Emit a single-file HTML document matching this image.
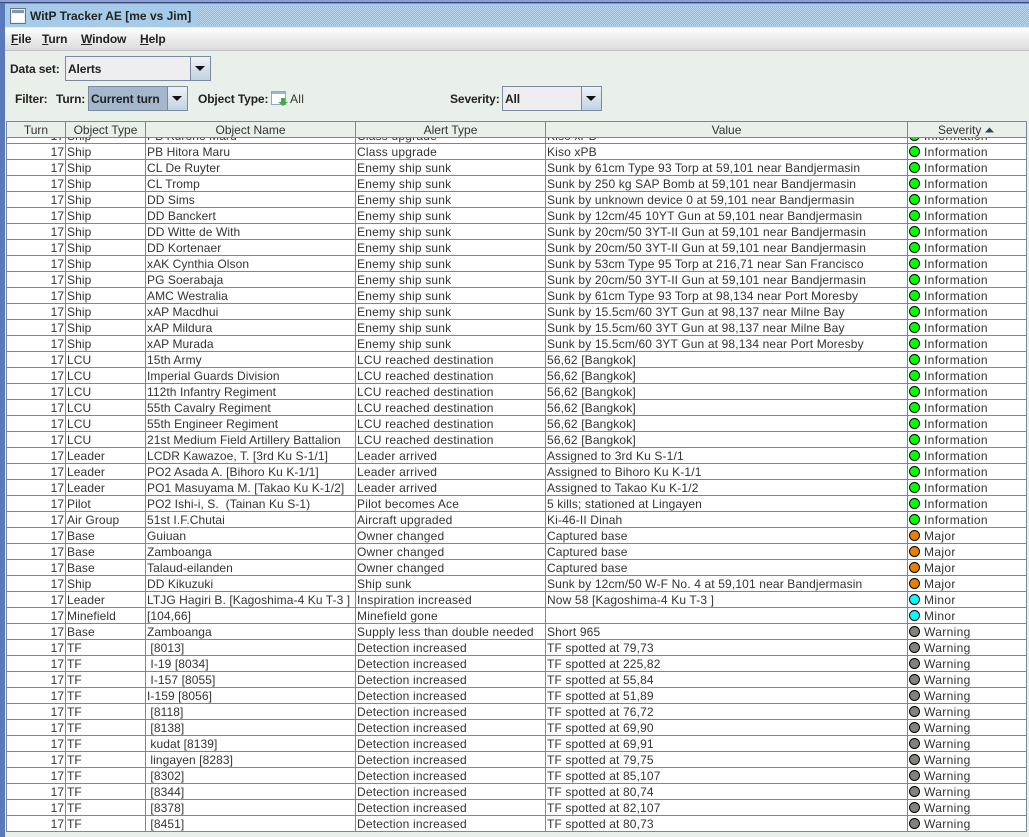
<!DOCTYPE html>
<html><head><meta charset="utf-8"><title>WitP Tracker AE</title>
<style>
html,body{margin:0;padding:0;width:1029px;height:837px;overflow:hidden;background:#eeeeee}
body{position:relative;font-family:"Liberation Sans",Arial,sans-serif;font-size:12px;color:#333}
.a{position:absolute;white-space:pre}
#bg{left:0;top:0;width:1029px;height:837px;background:conic-gradient(#f1ebf0 25%,#e9efe9 0 50%,#f1ebf0 0 75%,#e9efe9 0) 0 0/2px 2px}
#frame{left:0;top:0;width:1029px;height:4px;background:#7f93c4;border-top:2px solid #8aa0d0;border-bottom:0;box-sizing:border-box}
#frameline{left:0;top:2px;width:1029px;height:1px;background:#3b4a80}
#fl{left:0;top:3px;width:5px;height:834px;background:#5a78bc}
#title{left:5px;top:4px;width:1024px;height:23px;background:#a6cbe8}
#dots{left:197px;top:7px;width:832px;height:18px;background:conic-gradient(#9ab6d2 25%,#bcd7ec 0 50%,#9ab6d2 0 75%,#bcd7ec 0) 0 0/2px 2px}
#tt{left:30px;top:9px;font-weight:bold;color:#222;font-size:12px}
#menu{left:5px;top:28px;width:1024px;height:22px;background:linear-gradient(#ffffff,#f4f4f4 25%,#dcdcdc);border-bottom:1px solid #bfbfc8}
.m{top:32px;font-weight:bold;color:#222;letter-spacing:-.1px}
.l{font-weight:bold;color:#222;letter-spacing:-.12px}
.c{box-sizing:border-box;border:1px solid #7a8aa0;background:#eeeef0}
.b{position:absolute;right:0;top:0;bottom:0;width:19px;border-left:1px solid #7a8aa0;background:linear-gradient(#eef2f6,#c2d2e4)}
.b:after{content:"";position:absolute;left:4px;top:9px;border-left:5px solid transparent;border-right:5px solid transparent;border-top:5px solid #111}
#tbl{left:6px;top:138px;width:1021px;height:694px;overflow:hidden;background:#fff}
.r{position:absolute;left:0;width:1021px;height:16px;box-sizing:border-box;border-bottom:1px solid #77889e}
.r span{position:absolute;top:1px;line-height:14px;white-space:pre}
.r span:nth-child(1){left:0;width:58px;text-align:right}
.r span:nth-child(2){left:61px;letter-spacing:.1px}
.r span:nth-child(3){left:141px;letter-spacing:.08px}
.r span:nth-child(4){left:351px;letter-spacing:.2px}
.r span:nth-child(5){left:541px;letter-spacing:.14px}
.r span:nth-child(6){left:918px;letter-spacing:.35px}
.r i{position:absolute;left:903px;top:2px;width:9px;height:9px;border-radius:50%;border:1px solid #000}
.g i{background:#00ff00}.o i{background:#e87f00}.y i{background:#00ffff}.w i{background:#84807a}
.v{top:122px;width:1px;height:710px;background:#77889e}
.h{top:123px;line-height:14px;color:#333;text-align:center}
</style></head><body>
<div class="a" id="bg"></div>
<div class="a" id="title"></div><div class="a" id="dots"></div>
<div class="a" id="frame"></div><div class="a" id="frameline"></div><div class="a" id="fl"></div>
<svg class="a" style="left:10px;top:8px" width="16" height="16"><rect x=".5" y=".5" width="15" height="15" fill="#e9eef4" stroke="#6a7484"/><rect x="2" y="2" width="12" height="3" fill="#8495ad"/><rect x="2" y="6" width="12" height="8" fill="#fff"/></svg>
<div class="a" id="tt">WitP Tracker AE [me vs Jim]</div>
<div class="a" id="menu"></div>
<div class="a m" style="left:11px"><u>F</u>ile</div>
<div class="a m" style="left:42px"><u>T</u>urn</div>
<div class="a m" style="left:81px"><u>W</u>indow</div>
<div class="a m" style="left:140px"><u>H</u>elp</div>

<div class="a l" style="left:10px;top:62px">Data set:</div>
<div class="a c" style="left:65px;top:56px;width:146px;height:25px"><span class="a l" style="left:2px;top:5px">Alerts</span><div class="b"></div></div>
<div class="a l" style="left:15px;top:92px">Filter:</div>
<div class="a l" style="left:56px;top:92px">Turn:</div>
<div class="a c" style="left:88px;top:86px;width:100px;height:25px;background:#fff"><div class="a" style="left:0;top:0;width:80px;height:23px;background:#a3b8cc"></div><span class="a l" style="left:2px;top:5px">Current turn</span><div class="b"></div></div>
<div class="a l" style="left:198px;top:92px">Object Type:</div>
<svg class="a" style="left:271px;top:90px" width="18" height="17"><rect x=".5" y="1.5" width="14" height="13" fill="#fff" stroke="#8ea6c8"/><rect x="1" y="2" width="13" height="2" fill="#9db4d4"/><path d="M10 8h4v4h3l-5 4-5-4h3z" fill="#48a848"/></svg>
<div class="a" style="left:290px;top:92px;letter-spacing:.3px">All</div>
<div class="a l" style="left:450px;top:92px">Severity:</div>
<div class="a c" style="left:502px;top:86px;width:100px;height:25px"><span class="a l" style="left:2px;top:5px">All</span><div class="b"></div></div>

<div class="a" style="left:6px;top:121px;width:1021px;height:1px;background:#77889e"></div>
<div class="a" id="tbl">
<div class="r g" style="top:-10px"><span>17</span><span>Ship</span><span>PB Kurono Maru</span><span>Class upgrade</span><span>Kiso xPB</span><span>Information</span><i></i></div>
<div class="r g" style="top:6px"><span>17</span><span>Ship</span><span>PB Hitora Maru</span><span>Class upgrade</span><span>Kiso xPB</span><span>Information</span><i></i></div>
<div class="r g" style="top:22px"><span>17</span><span>Ship</span><span>CL De Ruyter</span><span>Enemy ship sunk</span><span>Sunk by 61cm Type 93 Torp at 59,101 near Bandjermasin</span><span>Information</span><i></i></div>
<div class="r g" style="top:38px"><span>17</span><span>Ship</span><span>CL Tromp</span><span>Enemy ship sunk</span><span>Sunk by 250 kg SAP Bomb at 59,101 near Bandjermasin</span><span>Information</span><i></i></div>
<div class="r g" style="top:54px"><span>17</span><span>Ship</span><span>DD Sims</span><span>Enemy ship sunk</span><span>Sunk by unknown device 0 at 59,101 near Bandjermasin</span><span>Information</span><i></i></div>
<div class="r g" style="top:70px"><span>17</span><span>Ship</span><span>DD Banckert</span><span>Enemy ship sunk</span><span>Sunk by 12cm/45 10YT Gun at 59,101 near Bandjermasin</span><span>Information</span><i></i></div>
<div class="r g" style="top:86px"><span>17</span><span>Ship</span><span>DD Witte de With</span><span>Enemy ship sunk</span><span>Sunk by 20cm/50 3YT-II Gun at 59,101 near Bandjermasin</span><span>Information</span><i></i></div>
<div class="r g" style="top:102px"><span>17</span><span>Ship</span><span>DD Kortenaer</span><span>Enemy ship sunk</span><span>Sunk by 20cm/50 3YT-II Gun at 59,101 near Bandjermasin</span><span>Information</span><i></i></div>
<div class="r g" style="top:118px"><span>17</span><span>Ship</span><span>xAK Cynthia Olson</span><span>Enemy ship sunk</span><span>Sunk by 53cm Type 95 Torp at 216,71 near San Francisco</span><span>Information</span><i></i></div>
<div class="r g" style="top:134px"><span>17</span><span>Ship</span><span>PG Soerabaja</span><span>Enemy ship sunk</span><span>Sunk by 20cm/50 3YT-II Gun at 59,101 near Bandjermasin</span><span>Information</span><i></i></div>
<div class="r g" style="top:150px"><span>17</span><span>Ship</span><span>AMC Westralia</span><span>Enemy ship sunk</span><span>Sunk by 61cm Type 93 Torp at 98,134 near Port Moresby</span><span>Information</span><i></i></div>
<div class="r g" style="top:166px"><span>17</span><span>Ship</span><span>xAP Macdhui</span><span>Enemy ship sunk</span><span>Sunk by 15.5cm/60 3YT Gun at 98,137 near Milne Bay</span><span>Information</span><i></i></div>
<div class="r g" style="top:182px"><span>17</span><span>Ship</span><span>xAP Mildura</span><span>Enemy ship sunk</span><span>Sunk by 15.5cm/60 3YT Gun at 98,137 near Milne Bay</span><span>Information</span><i></i></div>
<div class="r g" style="top:198px"><span>17</span><span>Ship</span><span>xAP Murada</span><span>Enemy ship sunk</span><span>Sunk by 15.5cm/60 3YT Gun at 98,134 near Port Moresby</span><span>Information</span><i></i></div>
<div class="r g" style="top:214px"><span>17</span><span>LCU</span><span>15th Army</span><span>LCU reached destination</span><span>56,62 [Bangkok]</span><span>Information</span><i></i></div>
<div class="r g" style="top:230px"><span>17</span><span>LCU</span><span>Imperial Guards Division</span><span>LCU reached destination</span><span>56,62 [Bangkok]</span><span>Information</span><i></i></div>
<div class="r g" style="top:246px"><span>17</span><span>LCU</span><span>112th Infantry Regiment</span><span>LCU reached destination</span><span>56,62 [Bangkok]</span><span>Information</span><i></i></div>
<div class="r g" style="top:262px"><span>17</span><span>LCU</span><span>55th Cavalry Regiment</span><span>LCU reached destination</span><span>56,62 [Bangkok]</span><span>Information</span><i></i></div>
<div class="r g" style="top:278px"><span>17</span><span>LCU</span><span>55th Engineer Regiment</span><span>LCU reached destination</span><span>56,62 [Bangkok]</span><span>Information</span><i></i></div>
<div class="r g" style="top:294px"><span>17</span><span>LCU</span><span>21st Medium Field Artillery Battalion</span><span>LCU reached destination</span><span>56,62 [Bangkok]</span><span>Information</span><i></i></div>
<div class="r g" style="top:310px"><span>17</span><span>Leader</span><span>LCDR Kawazoe, T. [3rd Ku S-1/1]</span><span>Leader arrived</span><span>Assigned to 3rd Ku S-1/1</span><span>Information</span><i></i></div>
<div class="r g" style="top:326px"><span>17</span><span>Leader</span><span>PO2 Asada A. [Bihoro Ku K-1/1]</span><span>Leader arrived</span><span>Assigned to Bihoro Ku K-1/1</span><span>Information</span><i></i></div>
<div class="r g" style="top:342px"><span>17</span><span>Leader</span><span>PO1 Masuyama M. [Takao Ku K-1/2]</span><span>Leader arrived</span><span>Assigned to Takao Ku K-1/2</span><span>Information</span><i></i></div>
<div class="r g" style="top:358px"><span>17</span><span>Pilot</span><span>PO2 Ishi-i, S.  (Tainan Ku S-1)</span><span>Pilot becomes Ace</span><span>5 kills; stationed at Lingayen</span><span>Information</span><i></i></div>
<div class="r g" style="top:374px"><span>17</span><span>Air Group</span><span>51st I.F.Chutai</span><span>Aircraft upgraded</span><span>Ki-46-II Dinah</span><span>Information</span><i></i></div>
<div class="r o" style="top:390px"><span>17</span><span>Base</span><span>Guiuan</span><span>Owner changed</span><span>Captured base</span><span>Major</span><i></i></div>
<div class="r o" style="top:406px"><span>17</span><span>Base</span><span>Zamboanga</span><span>Owner changed</span><span>Captured base</span><span>Major</span><i></i></div>
<div class="r o" style="top:422px"><span>17</span><span>Base</span><span>Talaud-eilanden</span><span>Owner changed</span><span>Captured base</span><span>Major</span><i></i></div>
<div class="r o" style="top:438px"><span>17</span><span>Ship</span><span>DD Kikuzuki</span><span>Ship sunk</span><span>Sunk by 12cm/50 W-F No. 4 at 59,101 near Bandjermasin</span><span>Major</span><i></i></div>
<div class="r y" style="top:454px"><span>17</span><span>Leader</span><span>LTJG Hagiri B. [Kagoshima-4 Ku T-3 ]</span><span>Inspiration increased</span><span>Now 58 [Kagoshima-4 Ku T-3 ]</span><span>Minor</span><i></i></div>
<div class="r y" style="top:470px"><span>17</span><span>Minefield</span><span>[104,66]</span><span>Minefield gone</span><span></span><span>Minor</span><i></i></div>
<div class="r w" style="top:486px"><span>17</span><span>Base</span><span>Zamboanga</span><span>Supply less than double needed</span><span>Short 965</span><span>Warning</span><i></i></div>
<div class="r w" style="top:502px"><span>17</span><span>TF</span><span> [8013]</span><span>Detection increased</span><span>TF spotted at 79,73</span><span>Warning</span><i></i></div>
<div class="r w" style="top:518px"><span>17</span><span>TF</span><span> I-19 [8034]</span><span>Detection increased</span><span>TF spotted at 225,82</span><span>Warning</span><i></i></div>
<div class="r w" style="top:534px"><span>17</span><span>TF</span><span> I-157 [8055]</span><span>Detection increased</span><span>TF spotted at 55,84</span><span>Warning</span><i></i></div>
<div class="r w" style="top:550px"><span>17</span><span>TF</span><span>I-159 [8056]</span><span>Detection increased</span><span>TF spotted at 51,89</span><span>Warning</span><i></i></div>
<div class="r w" style="top:566px"><span>17</span><span>TF</span><span> [8118]</span><span>Detection increased</span><span>TF spotted at 76,72</span><span>Warning</span><i></i></div>
<div class="r w" style="top:582px"><span>17</span><span>TF</span><span> [8138]</span><span>Detection increased</span><span>TF spotted at 69,90</span><span>Warning</span><i></i></div>
<div class="r w" style="top:598px"><span>17</span><span>TF</span><span> kudat [8139]</span><span>Detection increased</span><span>TF spotted at 69,91</span><span>Warning</span><i></i></div>
<div class="r w" style="top:614px"><span>17</span><span>TF</span><span> lingayen [8283]</span><span>Detection increased</span><span>TF spotted at 79,75</span><span>Warning</span><i></i></div>
<div class="r w" style="top:630px"><span>17</span><span>TF</span><span> [8302]</span><span>Detection increased</span><span>TF spotted at 85,107</span><span>Warning</span><i></i></div>
<div class="r w" style="top:646px"><span>17</span><span>TF</span><span> [8344]</span><span>Detection increased</span><span>TF spotted at 80,74</span><span>Warning</span><i></i></div>
<div class="r w" style="top:662px"><span>17</span><span>TF</span><span> [8378]</span><span>Detection increased</span><span>TF spotted at 82,107</span><span>Warning</span><i></i></div>
<div class="r w" style="top:678px"><span>17</span><span>TF</span><span> [8451]</span><span>Detection increased</span><span>TF spotted at 80,73</span><span>Warning</span><i></i></div>
</div>
<div class="a" style="left:6px;top:137px;width:1021px;height:1px;background:#77889e"></div>
<div class="a v" style="left:6px"></div><div class="a v" style="left:65px"></div><div class="a v" style="left:145px"></div><div class="a v" style="left:355px"></div><div class="a v" style="left:545px"></div><div class="a v" style="left:907px"></div><div class="a v" style="left:1026px"></div>
<div class="a h" style="left:7px;width:58px">Turn</div>
<div class="a h" style="left:66px;width:79px">Object Type</div>
<div class="a h" style="left:146px;width:209px">Object Name</div>
<div class="a h" style="left:356px;width:189px">Alert Type</div>
<div class="a h" style="left:546px;width:361px">Value</div>
<div class="a h" style="left:938px">Severity</div>
<svg class="a" style="left:985px;top:127px" width="10" height="6"><path d="M0 5.5L4.5 0.5 9 5.5z" fill="#2c4660"/></svg>
</body></html>
